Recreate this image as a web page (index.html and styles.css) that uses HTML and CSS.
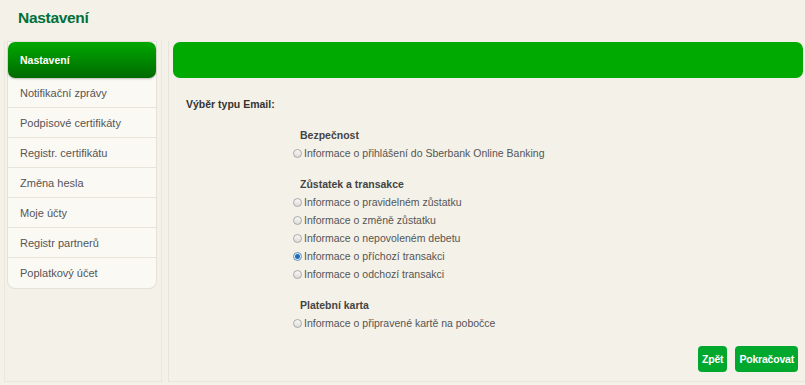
FILE: index.html
```html
<!DOCTYPE html>
<html lang="cs">
<head>
    <meta charset="UTF-8">
    <title>Nastavení</title>
    <link rel="stylesheet" href="styles.css">
</head>
<body>
    <h1 class="page-title">Nastavení</h1>

    <div class="layout">
        <!-- levé menu -->
        <div class="side">
            <ul class="menu">
                <li class="menu-item active">Nastavení</li>
                <li class="menu-item">Notifikační zprávy</li>
                <li class="menu-item">Podpisové certifikáty</li>
                <li class="menu-item">Registr. certifikátu</li>
                <li class="menu-item">Změna hesla</li>
                <li class="menu-item">Moje účty</li>
                <li class="menu-item">Registr partnerů</li>
                <li class="menu-item">Poplatkový účet</li>
            </ul>
        </div>

        <!-- obsah -->
        <div class="main">
            <div class="bar"></div>

            <form class="form">
                <div class="form-title">Výběr typu Email:</div>

                <div class="group">
                    <div class="group-title">Bezpečnost</div>
                    <label class="option"><input type="radio" name="email"> Informace o přihlášení do Sberbank Online Banking</label>
                </div>

                <div class="group">
                    <div class="group-title">Zůstatek a transakce</div>
                    <label class="option"><input type="radio" name="email"> Informace o pravidelném zůstatku</label>
                    <label class="option"><input type="radio" name="email"> Informace o změně zůstatku</label>
                    <label class="option"><input type="radio" name="email"> Informace o nepovoleném debetu</label>
                    <label class="option"><input type="radio" name="email" checked> Informace o příchozí transakci</label>
                    <label class="option"><input type="radio" name="email"> Informace o odchozí transakci</label>
                </div>

                <div class="group">
                    <div class="group-title">Platební karta</div>
                    <label class="option"><input type="radio" name="email"> Informace o připravené kartě na pobočce</label>
                </div>
            </form>

            <div class="actions">
                <button type="button" class="btn">Zpět</button>
                <button type="button" class="btn">Pokračovat</button>
            </div>
        </div>
    </div>
</body>
</html>
```

FILE: styles.css
```css
/* základ */
body {
    margin: 0;
    height: 385px;
    background-color: #f4f1e8;
    font-family: "Liberation Sans", Arial, sans-serif;
    font-size: 10.5px;
    color: #555;
    overflow: hidden;
}

.page-title {
    margin: 0;
    padding: 9px 0 0 18px;
    height: 41px;
    box-sizing: border-box;
    font-size: 15.5px;
    letter-spacing: -0.3px;
    color: #00703a;
}

.layout {
    display: flex;
    height: 341px;
    padding: 0 0 0 4px;
}

/* levé menu */
.side {
    width: 158px;
    padding: 1px 0 0 3px;
    box-sizing: border-box;
    border: 1px solid #ebe7dc;
    border-top: none;
}

.menu {
    list-style: none;
    margin: 0;
    padding: 0;
    width: 148px;
    background: #fbf9f4;
    border-radius: 0 0 7px 7px;
    box-shadow: 0 0 0 1px #e6e2d8;
}

.menu-item {
    height: 30px;
    line-height: 30px;
    padding-left: 12px;
    border-bottom: 1px solid #e8e4da;
    box-sizing: border-box;
    font-size: 11px;
    color: #555;
}

.menu-item:last-child {
    border-bottom: none;
}

.menu-item.active {
    height: 36px;
    line-height: 36px;
    border-radius: 7px;
    background: linear-gradient(#00a800, #006a00);
    color: white;
    font-weight: bold;
    font-size: 10.5px;
    border-bottom: none;
    box-shadow: 0 1px 2px rgba(0,0,0,0.25);
}

/* obsah */
.main {
    flex: 1;
    display: flex;
    flex-direction: column;
    margin-left: 6px;
    padding: 1px 2px 9px 4px;
    border-left: 1px solid #e8e4da;
    border-bottom: 1px solid #ebe7dc;
}

.main > * {
    flex-shrink: 0;
}

.bar {
    height: 36px;
    background-color: #00aa00;
    border-radius: 7px;
}

.form {
    padding: 19px 0 0 13px;
}

.form-title {
    font-weight: bold;
    color: #333;
    line-height: 14px;
    margin-bottom: 15px;
}

.group {
    padding-left: 107px;
    margin-bottom: 13px;
}

.group-title {
    font-weight: bold;
    color: #444;
    padding-left: 7px;
    line-height: 18px;
}

.option {
    display: flex;
    align-items: center;
    gap: 2px;
    line-height: 18px;
    height: 18px;
    color: #555;
}

.option input {
    appearance: none;
    margin: 0;
    width: 9px;
    height: 9px;
    border: 1px solid #a8a8a8;
    border-radius: 50%;
    background: linear-gradient(#f8f8f8, #dcdcdc);
}

.option input:checked {
    background: radial-gradient(circle, #1a6fc0 0, #1a6fc0 2px, #e8eef5 3px);
    border-color: #6a8fb8;
}

.actions {
    margin-top: auto;
    display: flex;
    justify-content: flex-end;
    gap: 8px;
    padding-right: 5px;
}

.btn {
    height: 26px;
    padding: 0 4px;
    border: none;
    border-radius: 4px;
    background-color: #00a82e;
    color: white;
    font-family: inherit;
    font-size: 10.5px;
    font-weight: bold;
    letter-spacing: -0.2px;
    cursor: pointer;
}

.btn:hover {
    background-color: #008a26;
}
```
